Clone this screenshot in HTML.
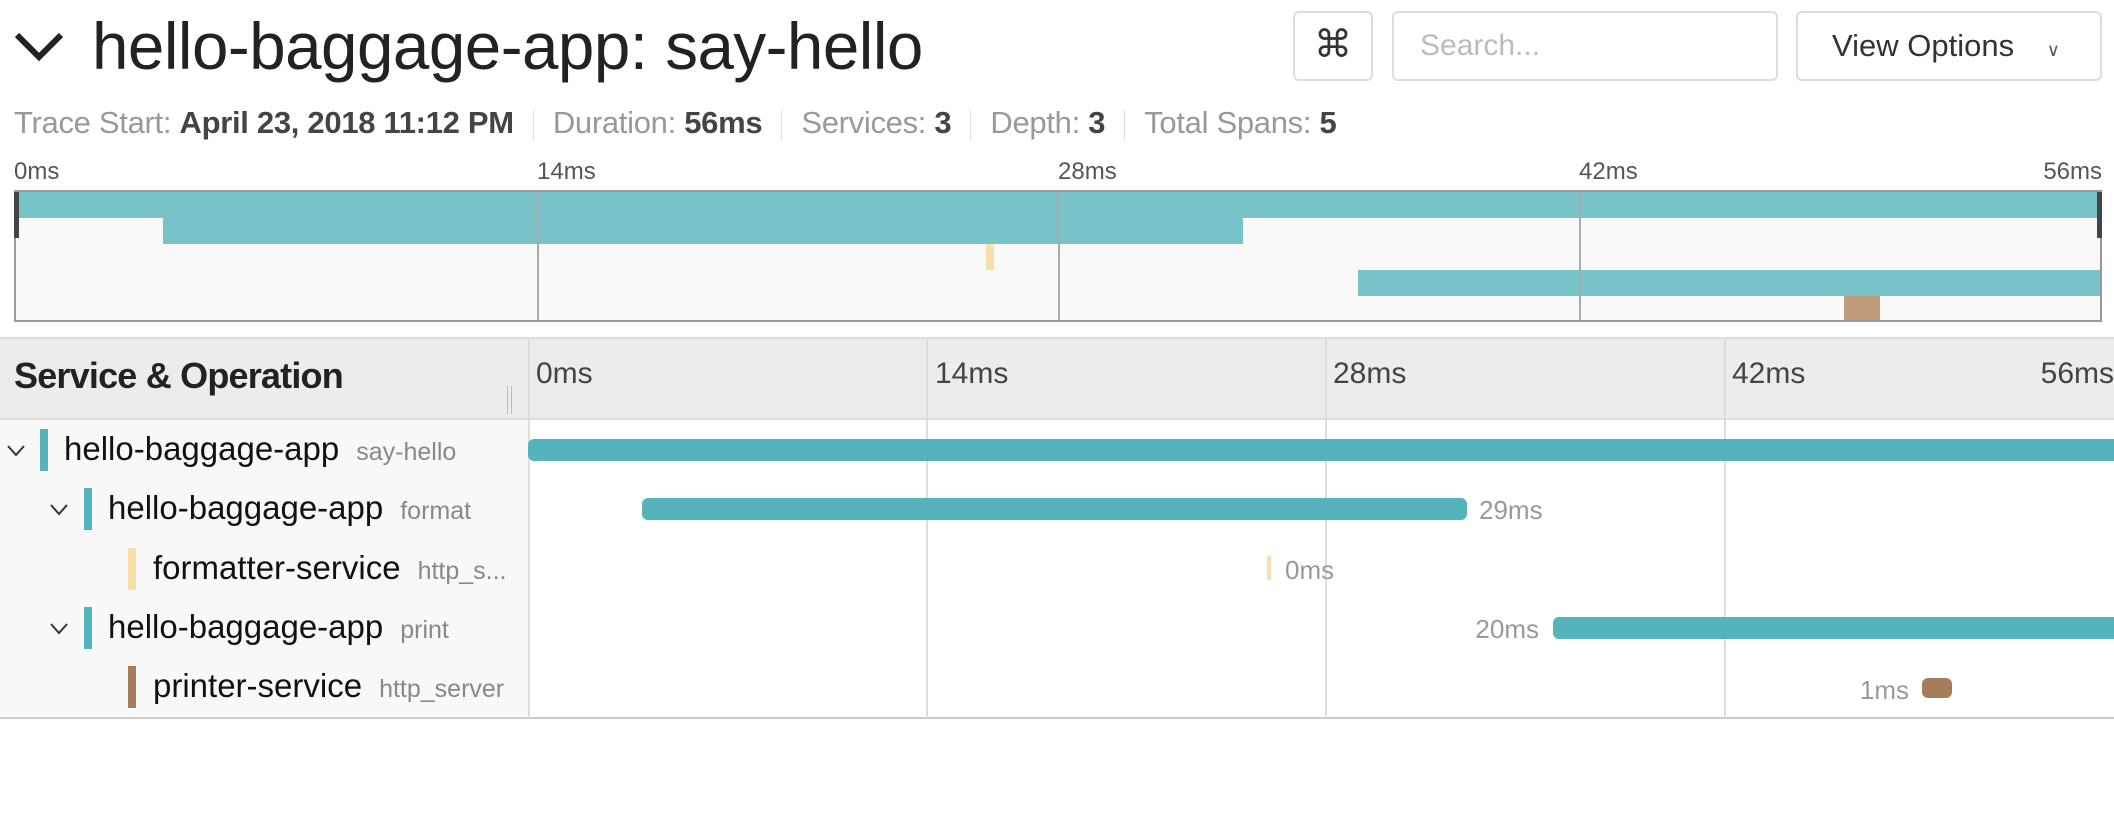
<!DOCTYPE html>
<html><head><meta charset="utf-8"><style>
*{margin:0;padding:0;box-sizing:border-box}
body{width:2114px;height:832px;position:relative;background:#fff;font-family:"Liberation Sans",Arial,sans-serif;overflow:hidden}
.a{position:absolute;white-space:nowrap}
.meta{font-size:31px;color:#999;top:103px;line-height:40px;letter-spacing:-0.3px}
.meta b{color:#444}
.sep{display:inline-block;width:1px;height:30px;background:#ddd;vertical-align:middle;margin:0 19px}
.mm{font-size:24px;color:#555;top:158px}
.gl{position:absolute;width:2px;background:#aaa}
.tl{font-size:30px;color:#444;top:357px}
.svc{font-size:33px;color:#111;line-height:40px}
.op{font-size:25px;color:#888;margin-left:17px}
.bar{position:absolute;border-radius:6px}
.lbl{font-size:26px;color:#999}
.cb{position:absolute;width:8px;height:42px}
</style></head><body>
<svg class="a" style="left:14px;top:30px" width="50" height="34" viewBox="0 0 50 34"><path d="M3 5 L25 27 L47 5" fill="none" stroke="#222" stroke-width="6"/></svg>
<div class="a" style="left:92px;top:5px;font-size:65.5px;color:#222;line-height:84px;letter-spacing:-0.5px">hello-baggage-app: say-hello</div>
<div class="a" style="left:1293px;top:11px;width:80px;height:70px;border:2px solid #ddd;border-radius:6px;font-size:38px;color:#333;text-align:center;line-height:64px">⌘</div>
<div class="a" style="left:1392px;top:11px;width:386px;height:70px;border:2px solid #ddd;border-radius:6px;font-size:30px;color:#bbb;line-height:66px;padding-left:26px">Search...</div>
<div class="a" style="left:1796px;top:11px;width:306px;height:70px;border:2px solid #ddd;border-radius:6px;font-size:31px;color:#333;line-height:66px;padding-left:34px">View Options <span style="font-size:18px;margin-left:24px;color:#555">∨</span></div>
<div class="a meta" style="left:14px">Trace Start: <b>April 23, 2018 11:12 PM</b><span class="sep"></span>Duration: <b>56ms</b><span class="sep"></span>Services: <b>3</b><span class="sep"></span>Depth: <b>3</b><span class="sep"></span>Total Spans: <b>5</b></div>
<div class="a mm" style="left:14px">0ms</div>
<div class="a mm" style="left:537px">14ms</div>
<div class="a mm" style="left:1058px">28ms</div>
<div class="a mm" style="left:1579px">42ms</div>
<div class="a mm" style="right:12px">56ms</div>
<div class="a" style="left:14px;top:190px;width:2088px;height:132px;border:2px solid #999;background:#f9f9f9">
 <div class="a" style="left:0;top:0;width:2084px;height:26px;background:#78c3c8"></div>
 <div class="a" style="left:147px;top:26px;width:1080px;height:26px;background:#78c3c8"></div>
 <div class="a" style="left:970px;top:52px;width:8px;height:26px;background:#f7e0a8"></div>
 <div class="a" style="left:1342px;top:78px;width:742px;height:26px;background:#78c3c8"></div>
 <div class="a" style="left:1828px;top:104px;width:36px;height:24px;background:#c09c7c"></div>
 <div class="gl" style="left:521px;top:0;height:128px"></div>
 <div class="gl" style="left:1042px;top:0;height:128px"></div>
 <div class="gl" style="left:1563px;top:0;height:128px"></div>
 <div class="a" style="left:-2px;top:0;width:5px;height:46px;background:#444"></div>
 <div class="a" style="right:-2px;top:0;width:5px;height:46px;background:#444"></div>
</div>
<div class="a" style="left:0;top:337px;width:2114px;height:83px;background:#ececec;border-top:2px solid #ddd;border-bottom:2px solid #ddd"></div>
<div class="a" style="left:0;top:420px;width:528px;height:298px;background:#f8f8f8"></div>
<div class="a" style="left:0;top:717px;width:2114px;height:2px;background:#ccc"></div>
<div class="a" style="left:14px;top:355px;font-size:36px;font-weight:bold;color:#222;letter-spacing:-0.8px">Service &amp; Operation</div>
<div class="a" style="left:507px;top:386px;width:5px;height:28px;border-left:1px solid #bbb;border-right:1px solid #bbb"></div>
<div class="gl" style="left:528px;top:337px;height:381px;background:#ddd"></div>
<div class="gl" style="left:926px;top:337px;height:381px;background:#ddd"></div>
<div class="gl" style="left:1325px;top:337px;height:381px;background:#ddd"></div>
<div class="gl" style="left:1724px;top:337px;height:381px;background:#ddd"></div>
<div class="a tl" style="left:536px">0ms</div>
<div class="a tl" style="left:935px">14ms</div>
<div class="a tl" style="left:1333px">28ms</div>
<div class="a tl" style="left:1732px">42ms</div>
<div class="a tl" style="right:0">56ms</div>

<svg class="a" style="left:7px;top:445px" width="18" height="12" viewBox="0 0 18 12"><path d="M1 1 L9 10 L17 1" fill="none" stroke="#333" stroke-width="2"/></svg>
<div class="cb" style="left:40px;top:429px;background:#54b3bb"></div>
<div class="a svc" style="left:64px;top:429px">hello-baggage-app<span class="op">say-hello</span></div>
<div class="bar" style="left:528px;top:439px;width:1600px;height:22px;background:#54b3bb"></div>

<svg class="a" style="left:50px;top:504px" width="18" height="12" viewBox="0 0 18 12"><path d="M1 1 L9 10 L17 1" fill="none" stroke="#333" stroke-width="2"/></svg>
<div class="cb" style="left:84px;top:488px;background:#54b3bb"></div>
<div class="a svc" style="left:108px;top:488px">hello-baggage-app<span class="op">format</span></div>
<div class="bar" style="left:642px;top:498px;width:825px;height:22px;background:#54b3bb"></div>
<div class="a lbl" style="left:1479px;top:495px">29ms</div>

<div class="cb" style="left:128px;top:548px;background:#f7e0a8"></div>
<div class="a svc" style="left:153px;top:548px">formatter-service<span class="op">http_s...</span></div>
<div class="bar" style="left:1267px;top:556px;width:4px;height:24px;background:#f7e0a8;border-radius:1px"></div>
<div class="a lbl" style="left:1285px;top:555px">0ms</div>

<svg class="a" style="left:50px;top:623px" width="18" height="12" viewBox="0 0 18 12"><path d="M1 1 L9 10 L17 1" fill="none" stroke="#333" stroke-width="2"/></svg>
<div class="cb" style="left:84px;top:607px;background:#54b3bb"></div>
<div class="a svc" style="left:108px;top:607px">hello-baggage-app<span class="op">print</span></div>
<div class="bar" style="left:1553px;top:617px;width:600px;height:22px;background:#54b3bb"></div>
<div class="a lbl" style="right:575px;top:614px">20ms</div>

<div class="cb" style="left:128px;top:666px;background:#a67c5b"></div>
<div class="a svc" style="left:153px;top:666px">printer-service<span class="op">http_server</span></div>
<div class="bar" style="left:1922px;top:678px;width:30px;height:20px;background:#a67c5b"></div>
<div class="a lbl" style="right:205px;top:675px">1ms</div>
</body></html>
